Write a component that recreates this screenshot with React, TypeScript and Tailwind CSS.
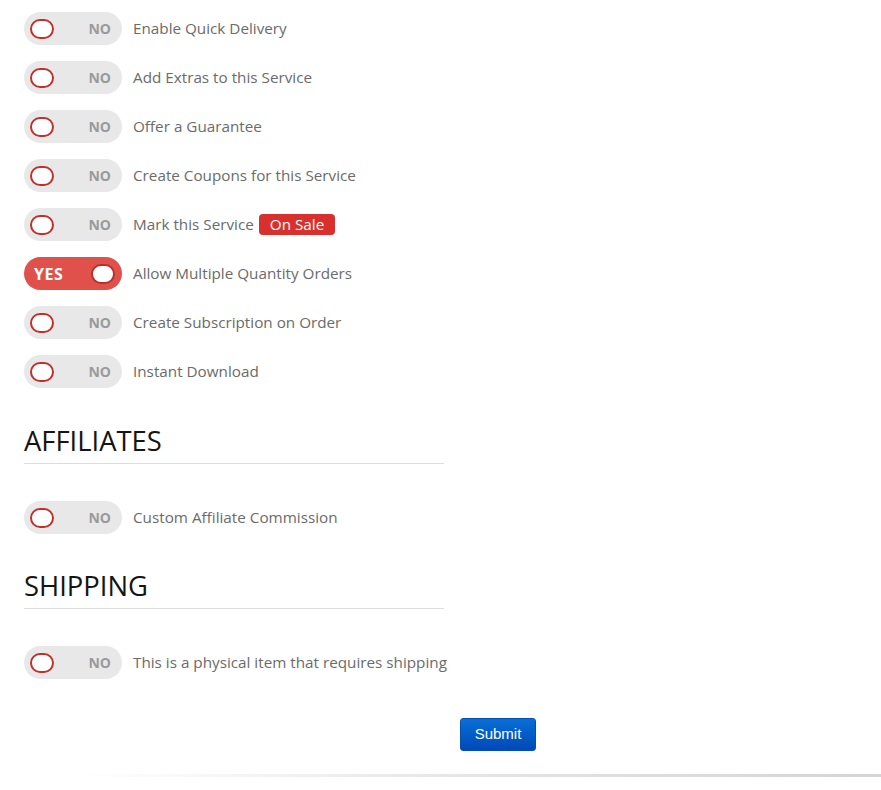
import React from 'react';

type Row = { label: string; on?: boolean; badge?: string };

const mainRows: Row[] = [
  { label: 'Enable Quick Delivery' },
  { label: 'Add Extras to this Service' },
  { label: 'Offer a Guarantee' },
  { label: 'Create Coupons for this Service' },
  { label: 'Mark this Service', badge: 'On Sale' },
  { label: 'Allow Multiple Quantity Orders', on: true },
  { label: 'Create Subscription on Order' },
  { label: 'Instant Download' },
];

const Toggle: React.FC<{ on?: boolean }> = ({ on }) =>
  on ? (
    <div className="w-[98px] h-[33px] shrink-0 rounded-full bg-[#e0514b] flex items-center justify-between pl-[10px] pr-[7px]">
      <span className="text-white font-bold text-[16px] tracking-[0.5px]">YES</span>
      <span className="w-[24px] h-[20px] rounded-full bg-white border-2 border-[#b8302b]" />
    </div>
  ) : (
    <div className="w-[98px] h-[33px] shrink-0 rounded-full bg-[#e8e8e8] flex items-center justify-between pl-[6px] pr-[11px]">
      <span className="w-[24px] h-[20px] rounded-full bg-white border-2 border-[#c0302d]" />
      <span className="text-[#9a9a9a] font-bold text-[14px]">NO</span>
    </div>
  );

const ToggleRow: React.FC<{ row: Row }> = ({ row }) => (
  <div className="flex items-center gap-[11px] h-[33px]">
    <Toggle on={row.on} />
    <span className="text-[15.25px] text-[#6b6b6b]">{row.label}</span>
    {row.badge && (
      <span className="ml-[-6px] bg-[#d8302c] text-white text-[15.25px] leading-[21px] px-[11px] rounded-[4px]">
        {row.badge}
      </span>
    )}
  </div>
);

const Section: React.FC<{ title: string; row: Row }> = ({ title, row }) => (
  <div className="mt-[38px]">
    <h2 className="text-[27.4px] leading-[30px] text-[#151515] w-[420px] border-b border-[#dddddd] pb-[7px]">
      {title}
    </h2>
    <div className="mt-[37px]">
      <ToggleRow row={row} />
    </div>
  </div>
);

export default function App() {
  return (
    <div className="w-[881px] h-[790px] bg-white font-['Open_Sans',sans-serif] relative overflow-hidden">
      <div className="pl-[24px] pt-[12px]">
        <div className="flex flex-col gap-[16px]">
          {mainRows.map(r => (
            <ToggleRow key={r.label} row={r} />
          ))}
        </div>
        <Section title="AFFILIATES" row={{ label: 'Custom Affiliate Commission' }} />
        <div className="-mt-[1px]">
          <Section title="SHIPPING" row={{ label: 'This is a physical item that requires shipping' }} />
        </div>
      </div>
      <div className="flex justify-center mt-[39px] pl-[115px]">
        <button className="h-[33px] px-[14px] rounded-[3px] text-white text-[15px] font-['Liberation_Sans',Arial,sans-serif] bg-gradient-to-b from-[#0a6fd6] to-[#0248b8] border border-[#0350b5]">
          Submit
        </button>
      </div>
      <div className="absolute left-[80px] right-0 top-[774px] h-[3px] bg-gradient-to-r from-transparent via-[#e4e4e4] to-[#d4d4d4]" />
    </div>
  );
}
